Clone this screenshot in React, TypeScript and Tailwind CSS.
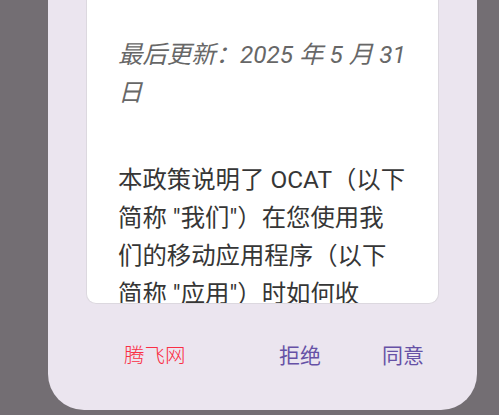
import React from "react";

const font = { fontFamily: 'Roboto, "Noto Sans CJK SC", sans-serif' };

export default function App() {
  const body = [
    "本政策说明了 OCAT（以下",
    "简称 \"我们\"）在您使用我",
    "们的移动应用程序（以下",
    "简称 \"应用\"）时如何收",
  ];
  return (
    <div
      className="w-[499px] h-[415px] bg-[#736e73] overflow-hidden"
      style={font}
    >
      <div className="ml-[48px] w-[429px] h-[410px] bg-[#ebe5ef] rounded-b-[36px] flex flex-col">
        <div className="mx-[38px] h-[304px] bg-white rounded-b-[10px] border border-t-0 border-[#dcd8df] overflow-hidden shrink-0">
          <div className="pl-[31px] pt-[36px]">
            <div className="italic text-[24.4px] leading-[38px] text-[#676767]">
              <div className="whitespace-nowrap">最后更新：2025 年 5 月 31</div>
              <div className="whitespace-nowrap">日</div>
            </div>
            <div className="mt-[49px] text-[24.4px] leading-[38px] text-[#363636]">
              {body.map((l) => (
                <div key={l} className="whitespace-nowrap">
                  {l}
                </div>
              ))}
            </div>
          </div>
        </div>
        <div className="flex items-center pl-[76px] pr-[53px] h-[104px]">
          <span className="text-[20.5px] font-light text-[#fa2f45] leading-none">腾飞网</span>
          <span className="ml-auto text-[21px] font-normal text-[#6651a6] leading-none">拒绝</span>
          <span className="ml-[61px] text-[21px] font-normal text-[#6651a6] leading-none">同意</span>
        </div>
      </div>
    </div>
  );
}
